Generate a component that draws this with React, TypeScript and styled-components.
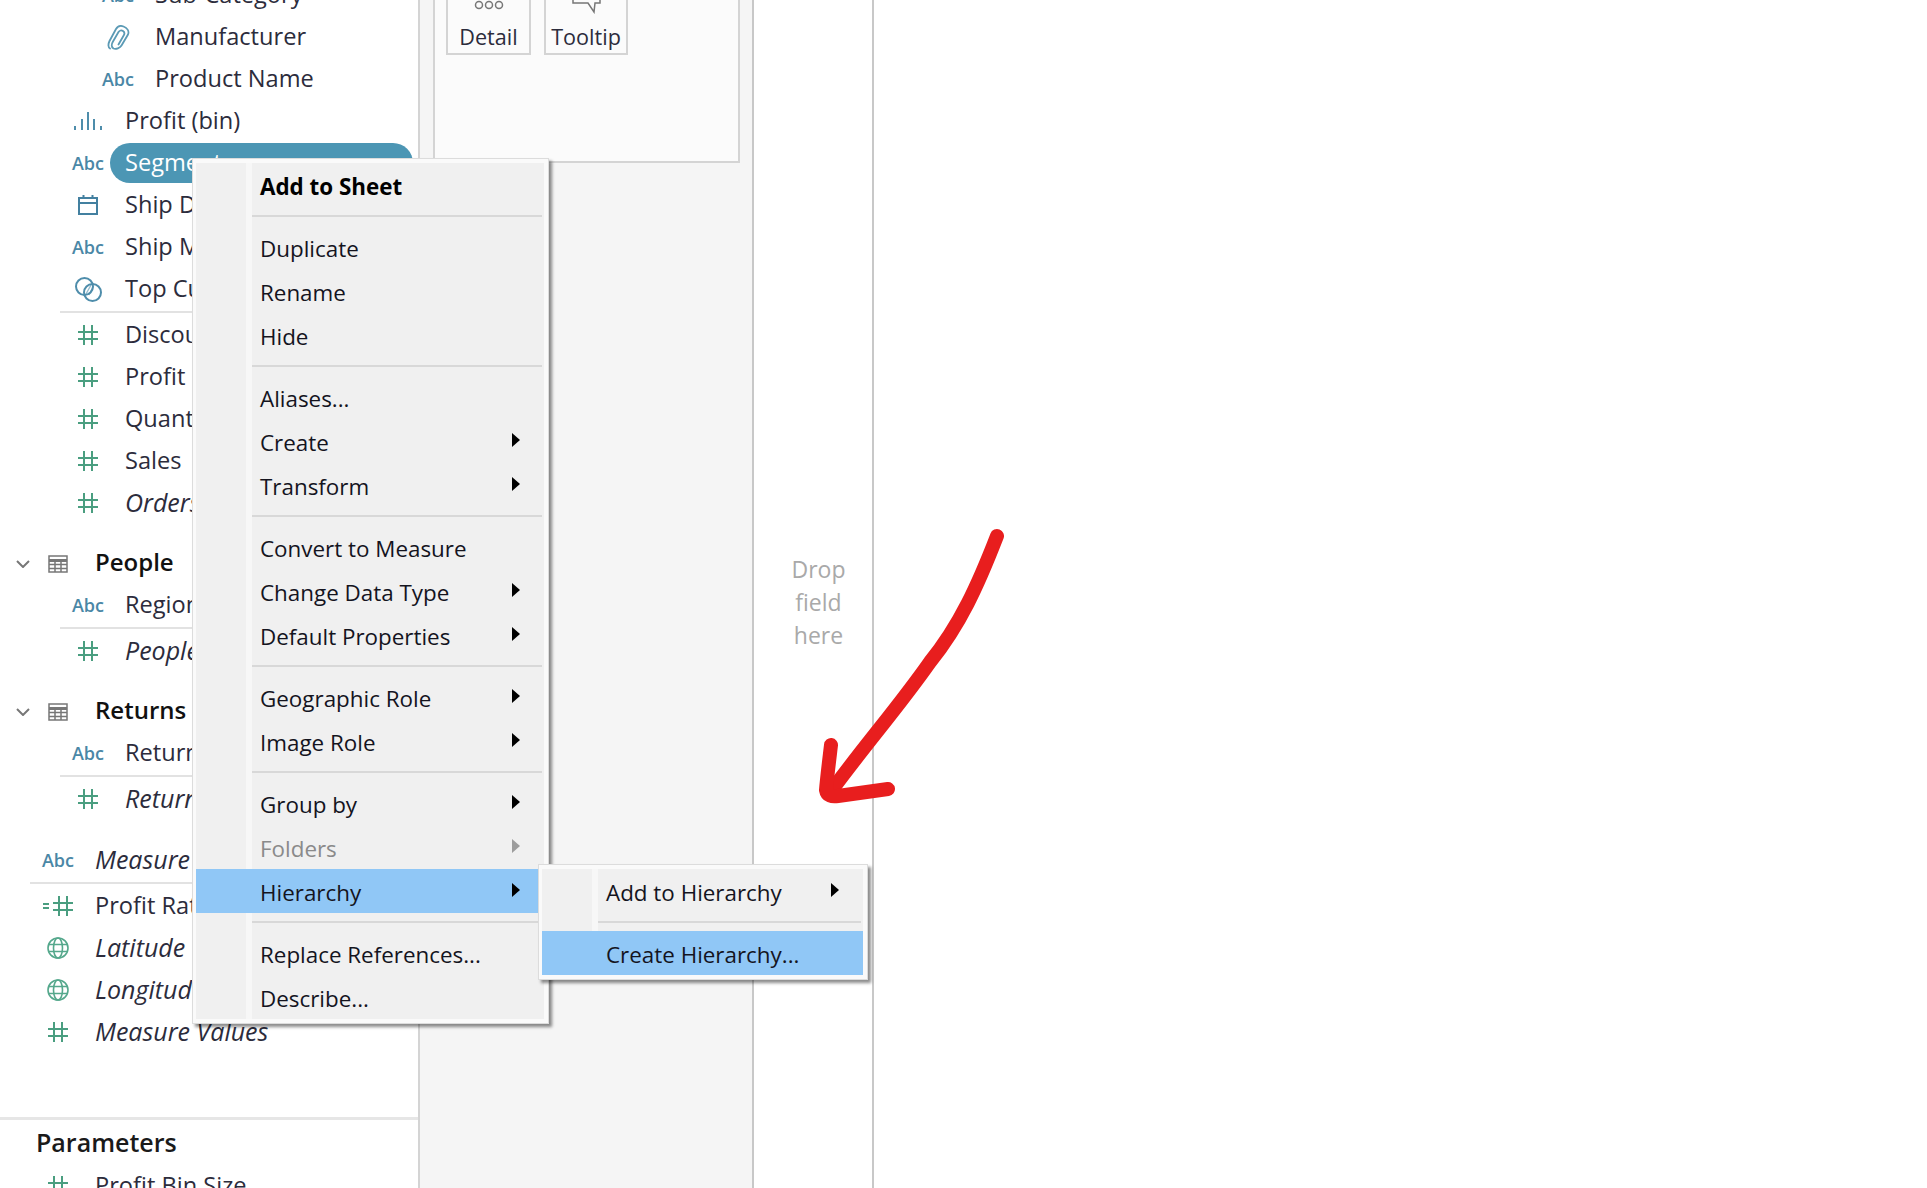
import React from 'react'
import styled, { createGlobalStyle } from 'styled-components'

const GlobalStyle = createGlobalStyle`
  html, body {
    margin: 0;
    background: #fff;
    overflow: hidden;
  }
  * {
    box-sizing: border-box;
  }
`

const Page = styled.div`
  position: relative;
  display: flex;
  width: 1927px;
  height: 1188px;
  overflow: hidden;
  background: #fff;
  font-family: 'Open Sans', 'Noto Sans', 'Liberation Sans', sans-serif;
`

const Sidebar = styled.aside`
  flex: 0 0 420px;
  height: 1188px;
  border-right: 2px solid #d4d4d4;
  overflow: hidden;
`

const FieldList = styled.div`
  margin-top: -26px;
  display: flex;
  flex-direction: column;
`

const Row = styled.div<{ $depth: number; $gap?: number }>`
  display: flex;
  align-items: center;
  height: 42px;
  flex: 0 0 42px;
  margin-top: ${(p) => p.$gap ?? 0}px;
  padding-left: ${(p) => 38 + p.$depth * 30}px;
`

const IconSlot = styled.span`
  flex: 0 0 40px;
  display: flex;
  align-items: center;
  justify-content: center;
  color: #4e8dab;
`

const AbcIcon = styled.span`
  font-size: 18px;
  font-weight: 600;
  color: #4a87a6;
`

const Label = styled.span<{ $selected?: boolean; $italic?: boolean }>`
  flex: 1;
  height: 40px;
  line-height: 39px;
  margin: 0 5px 0 2px;
  padding-left: 15px;
  border-radius: 20px;
  font-size: ${(p) => (p.$italic ? 25 : 23.6)}px;
  white-space: nowrap;
  overflow: hidden;
  font-style: ${(p) => (p.$italic ? 'italic' : 'normal')};
  color: ${(p) => (p.$selected ? '#fff' : '#2c2c3c')};
  background: ${(p) => (p.$selected ? '#4c96b4' : 'transparent')};
`

const RowDivider = styled.div<{ $left: number }>`
  flex: 0 0 4px;
  margin-left: ${(p) => p.$left}px;
  border-top: 1px solid transparent;
  border-bottom: 1px solid transparent;
  background: #e2e2e2;
  background-clip: padding-box;
`

const TableHeader = styled.div`
  display: flex;
  align-items: center;
  height: 42px;
  flex: 0 0 42px;
  margin-top: 18px;
  padding-left: 16px;
`

const Chevron = styled.svg`
  width: 14px;
  height: 8px;
  margin: 2px 18px 0 0;
`

const TableGlyph = styled.svg`
  width: 20px;
  height: 18px;
  margin: 2px 27px 0 0;
`

const TableName = styled.span`
  font-size: 24px;
  font-weight: 600;
  line-height: 40px;
  margin-bottom: 2px;
  color: #111;
`

const ParametersHead = styled.div`
  margin-top: 64px;
  border-top: 3px solid #e6e6e6;
  height: 48px;
  padding: 0 0 2px 36px;
  display: flex;
  align-items: center;
  font-size: 25px;
  font-weight: 600;
  color: #1a1a1a;
`

const Middle = styled.section`
  flex: 0 0 334px;
  height: 1188px;
  background: #f5f5f5;
  padding-left: 13px;
  border-right: 2px solid #c8c8c8;
`

const MarksCard = styled.div`
  width: 307px;
  height: 163px;
  display: flex;
  align-items: flex-start;
  gap: 13px;
  padding-left: 11px;
  background: #fbfbfb;
  border: 2px solid #d4d4d4;
  border-top: none;
`

const MarkButton = styled.div<{ $width: number }>`
  width: ${(p) => p.$width}px;
  height: 55px;
  display: flex;
  flex-direction: column;
  align-items: center;
  justify-content: space-between;
  padding-bottom: 2px;
  border: 2px solid #d4d4d4;
  border-top: none;
  font-size: 21.6px;
  line-height: 28px;
  color: #2c2c3c;
`

const RowsColumn = styled.section`
  flex: 0 0 120px;
  height: 1188px;
  border-right: 2px solid #c8c8c8;
  display: flex;
  align-items: center;
  justify-content: center;
  padding: 16px 0 0 11px;
`

const DropHint = styled.div`
  font-size: 23px;
  line-height: 33px;
  text-align: center;
  color: #a9a9a9;
`

const MenuPanel = styled.div<{ $left: number; $top: number; $width: number }>`
  position: absolute;
  left: ${(p) => p.$left}px;
  top: ${(p) => p.$top}px;
  width: ${(p) => p.$width}px;
  padding: 4px 4px 4px 3px;
  border: 1px solid #dcdcdc;
  background: #fafafa;
  box-shadow: 3px 3px 3px rgba(0, 0, 0, 0.45);
`

const MenuInner = styled.div`
  background: linear-gradient(
    90deg,
    #f0f0f0 50px,
    #f7f7f7 50px,
    #f7f7f7 56px,
    #f0f0f0 56px
  );
`

const MenuItem = styled.div<{ $active?: boolean; $disabled?: boolean; $strong?: boolean }>`
  display: flex;
  align-items: center;
  height: 44px;
  padding: 3px 24px 0 64px;
  font-size: 22.4px;
  font-weight: ${(p) => (p.$strong ? 700 : 400)};
  white-space: nowrap;
  color: ${(p) => (p.$disabled ? '#8a8a8a' : p.$strong ? '#000' : '#14141e')};
  background: ${(p) => (p.$active ? '#90c7f6' : 'transparent')};
`

const Caret = styled.span<{ $disabled?: boolean }>`
  margin-left: auto;
  margin-top: -6px;
  width: 0;
  height: 0;
  border-top: 7px solid transparent;
  border-bottom: 7px solid transparent;
  border-left: 8px solid ${(p) => (p.$disabled ? '#9c9c9c' : '#000')};
`

const MenuSeparator = styled.div`
  height: 18px;
  margin: 0 2px 0 56px;
  padding-top: 8px;
  &::after {
    content: '';
    display: block;
    height: 2px;
    background: #d8d8d8;
  }
`

const Annotation = styled.svg`
  position: absolute;
  left: 800px;
  top: 500px;
  width: 220px;
  height: 320px;
`

const Hash = ({ shift }: { shift?: boolean }) => (
  <svg width={shift ? 30 : 20} height="20" viewBox={shift ? '-10 0 30 20' : '0 0 20 20'} fill="none" stroke="#4a9e80" strokeWidth="2">
    <path d="M6 0v20M14 0v20M0 7h20M0 14h20" />
    {shift && <path d="M-10 8h6M-10 12h6" />}
  </svg>
)

const Globe = () => (
  <svg width="22" height="22" viewBox="0 0 22 22" fill="none" stroke="#55a88c" strokeWidth="1.6">
    <circle cx="11" cy="11" r="10" />
    <ellipse cx="11" cy="11" rx="4.5" ry="10" />
    <path d="M1.5 7.5h19M1.5 14.5h19" />
  </svg>
)

const Bins = () => (
  <svg width="28" height="20" viewBox="0 0 28 20" fill="#4e8dab">
    <rect x="0" y="15" width="2" height="4" />
    <rect x="7" y="8" width="2" height="11" />
    <rect x="13" y="1" width="2" height="18" />
    <rect x="19" y="8" width="2" height="11" />
    <rect x="26" y="15" width="2" height="4" />
  </svg>
)

const CalendarIcon = () => (
  <svg width="20" height="20" viewBox="0 0 20 20" fill="none" stroke="#4380a0" strokeWidth="2">
    <rect x="1" y="3" width="18" height="16" />
    <path d="M1 8h18M5.5 0v4M14.5 0v4" />
  </svg>
)

const SetIcon = () => (
  <svg width="27" height="25" viewBox="0 0 27 25" fill="none" stroke="#4e8dab" strokeWidth="2">
    <circle cx="9.5" cy="9.5" r="8.5" />
    <circle cx="17.5" cy="15.5" r="8.5" />
    <path d="M11 17l5-9M14 18l4-8" strokeWidth="1.4" opacity="0.6" />
  </svg>
)

const ClipIcon = () => (
  <svg width="23" height="25" viewBox="0 0 23 25" fill="none" stroke="#5b9ab5" strokeWidth="1.8" strokeLinecap="round">
    <path d="M3 23.5C1 22.5 1 19 2.5 16L9 4C10.8 1 14 0.5 16.5 1.5C20 3 22.5 6 21 9.5L14.5 20.5C13 23 9 24.5 6.5 23.5C4 22 4.5 19 6 16.5L11.5 7C12.5 5.5 14.5 5 16 6C17.5 7 17.5 9 16.8 10.2L11.5 19.5" />
  </svg>
)

const iconFor = (kind: string) => {
  switch (kind) {
    case 'abc':
      return <AbcIcon>Abc</AbcIcon>
    case 'clip':
      return <ClipIcon />
    case 'bin':
      return <Bins />
    case 'date':
      return <CalendarIcon />
    case 'set':
      return <SetIcon />
    case 'calc':
      return <Hash shift />
    case 'geo':
      return <Globe />
    default:
      return <Hash />
  }
}

type Field = { name: string; icon: string; depth?: number; italic?: boolean; selected?: boolean }

const Fields = ({ items }: { items: Field[] }) => (
  <>
    {items.map((f) => (
      <Row key={f.name} $depth={f.depth ?? 1}>
        <IconSlot>{iconFor(f.icon)}</IconSlot>
        <Label $italic={f.italic} $selected={f.selected}>
          {f.name}
        </Label>
      </Row>
    ))}
  </>
)

const TableHead = ({ name }: { name: string }) => (
  <TableHeader>
    <Chevron viewBox="0 0 14 8" fill="none" stroke="#777" strokeWidth="2">
      <path d="M1 1l6 6 6-6" />
    </Chevron>
    <TableGlyph viewBox="0 0 20 18" fill="none" stroke="#777" strokeWidth="1.5">
      <rect x="1" y="1" width="18" height="16" />
      <path d="M1 5.5h18" strokeWidth="3" />
      <path d="M1 9.5h18M1 13.5h18M7 5v12M13 5v12" />
    </TableGlyph>
    <TableName>{name}</TableName>
  </TableHeader>
)

const orderFields: Field[] = [
  { name: 'Sub-Category', icon: 'abc', depth: 2 },
  { name: 'Manufacturer', icon: 'clip', depth: 2 },
  { name: 'Product Name', icon: 'abc', depth: 2 },
  { name: 'Profit (bin)', icon: 'bin' },
  { name: 'Segment', icon: 'abc', selected: true },
  { name: 'Ship Date', icon: 'date' },
  { name: 'Ship Mode', icon: 'abc' },
  { name: 'Top Customers', icon: 'set' },
]

const orderMeasures: Field[] = [
  { name: 'Discount', icon: 'hash' },
  { name: 'Profit', icon: 'hash' },
  { name: 'Quantity', icon: 'hash' },
  { name: 'Sales', icon: 'hash' },
  { name: 'Orders (Count)', icon: 'hash', italic: true },
]

const generated: Field[] = [
  { name: 'Profit Ratio', icon: 'calc', depth: 0 },
  { name: 'Latitude (generated)', icon: 'geo', depth: 0, italic: true },
  { name: 'Longitude (generated)', icon: 'geo', depth: 0, italic: true },
  { name: 'Measure Values', icon: 'hash', depth: 0, italic: true },
]

type Entry = { label?: string; sub?: boolean; strong?: boolean; disabled?: boolean; active?: boolean }

const mainMenu: Entry[] = [
  { label: 'Add to Sheet', strong: true },
  {},
  { label: 'Duplicate' },
  { label: 'Rename' },
  { label: 'Hide' },
  {},
  { label: 'Aliases...' },
  { label: 'Create', sub: true },
  { label: 'Transform', sub: true },
  {},
  { label: 'Convert to Measure' },
  { label: 'Change Data Type', sub: true },
  { label: 'Default Properties', sub: true },
  {},
  { label: 'Geographic Role', sub: true },
  { label: 'Image Role', sub: true },
  {},
  { label: 'Group by', sub: true },
  { label: 'Folders', sub: true, disabled: true },
  { label: 'Hierarchy', sub: true, active: true },
  {},
  { label: 'Replace References...' },
  { label: 'Describe...' },
]

const hierarchyMenu: Entry[] = [
  { label: 'Add to Hierarchy', sub: true },
  {},
  { label: 'Create Hierarchy...', active: true },
]

const MenuEntries = ({ items }: { items: Entry[] }) => (
  <MenuInner>
    {items.map((e, i) =>
      e.label ? (
        <MenuItem key={e.label} $active={e.active} $disabled={e.disabled} $strong={e.strong}>
          {e.label}
          {e.sub && <Caret $disabled={e.disabled} />}
        </MenuItem>
      ) : (
        <MenuSeparator key={i} />
      ),
    )}
  </MenuInner>
)

const App: React.FC = () => {
  return (
    <Page>
      <GlobalStyle />
      <Sidebar>
        <FieldList>
          <Fields items={orderFields} />
          <RowDivider $left={60} />
          <Fields items={orderMeasures} />
          <TableHead name="People" />
          <Fields items={[{ name: 'Region', icon: 'abc' }]} />
          <RowDivider $left={60} />
          <Fields items={[{ name: 'People (Count)', icon: 'hash', italic: true }]} />
          <TableHead name="Returns" />
          <Fields items={[{ name: 'Returned', icon: 'abc' }]} />
          <RowDivider $left={60} />
          <Fields items={[{ name: 'Returns (Count)', icon: 'hash', italic: true }]} />
          <Row $depth={0} $gap={19}>
            <IconSlot>
              <AbcIcon>Abc</AbcIcon>
            </IconSlot>
            <Label $italic>Measure Names</Label>
          </Row>
          <RowDivider $left={30} />
          <Fields items={generated} />
          <ParametersHead>Parameters</ParametersHead>
          <Fields items={[{ name: 'Profit Bin Size', icon: 'hash', depth: 0 }]} />
        </FieldList>
      </Sidebar>

      <Middle>
        <MarksCard>
          <MarkButton $width={85}>
            <svg width="30" height="10" viewBox="0 0 30 10" fill="none" stroke="#777" strokeWidth="1.5">
              <circle cx="5" cy="5" r="3.5" />
              <circle cx="15" cy="5" r="3.5" />
              <circle cx="25" cy="5" r="3.5" />
            </svg>
            Detail
          </MarkButton>
          <MarkButton $width={84}>
            <svg width="30" height="14" viewBox="0 0 30 14" fill="none" stroke="#777" strokeWidth="1.5">
              <path d="M2 0v3h15l6 9 1-9h5V0" />
            </svg>
            Tooltip
          </MarkButton>
        </MarksCard>
      </Middle>

      <RowsColumn>
        <DropHint>
          Drop
          <br />
          field
          <br />
          here
        </DropHint>
      </RowsColumn>

      <MenuPanel $left={192} $top={158} $width={357}>
        <MenuEntries items={mainMenu} />
        <MenuPanel $left={345} $top={705} $width={330}>
          <MenuEntries items={hierarchyMenu} />
        </MenuPanel>
      </MenuPanel>

      <Annotation viewBox="800 500 220 320" fill="none" stroke="#e81e1e" strokeWidth="14" strokeLinecap="round" strokeLinejoin="round">
        <path d="M997 536C978 585 960 625 930 662C900 705 865 745 832 790" />
        <path d="M831 745C829 762 827 778 826 790C827 796 832 797 838 796L888 789" />
      </Annotation>
    </Page>
  )
}

export default App
